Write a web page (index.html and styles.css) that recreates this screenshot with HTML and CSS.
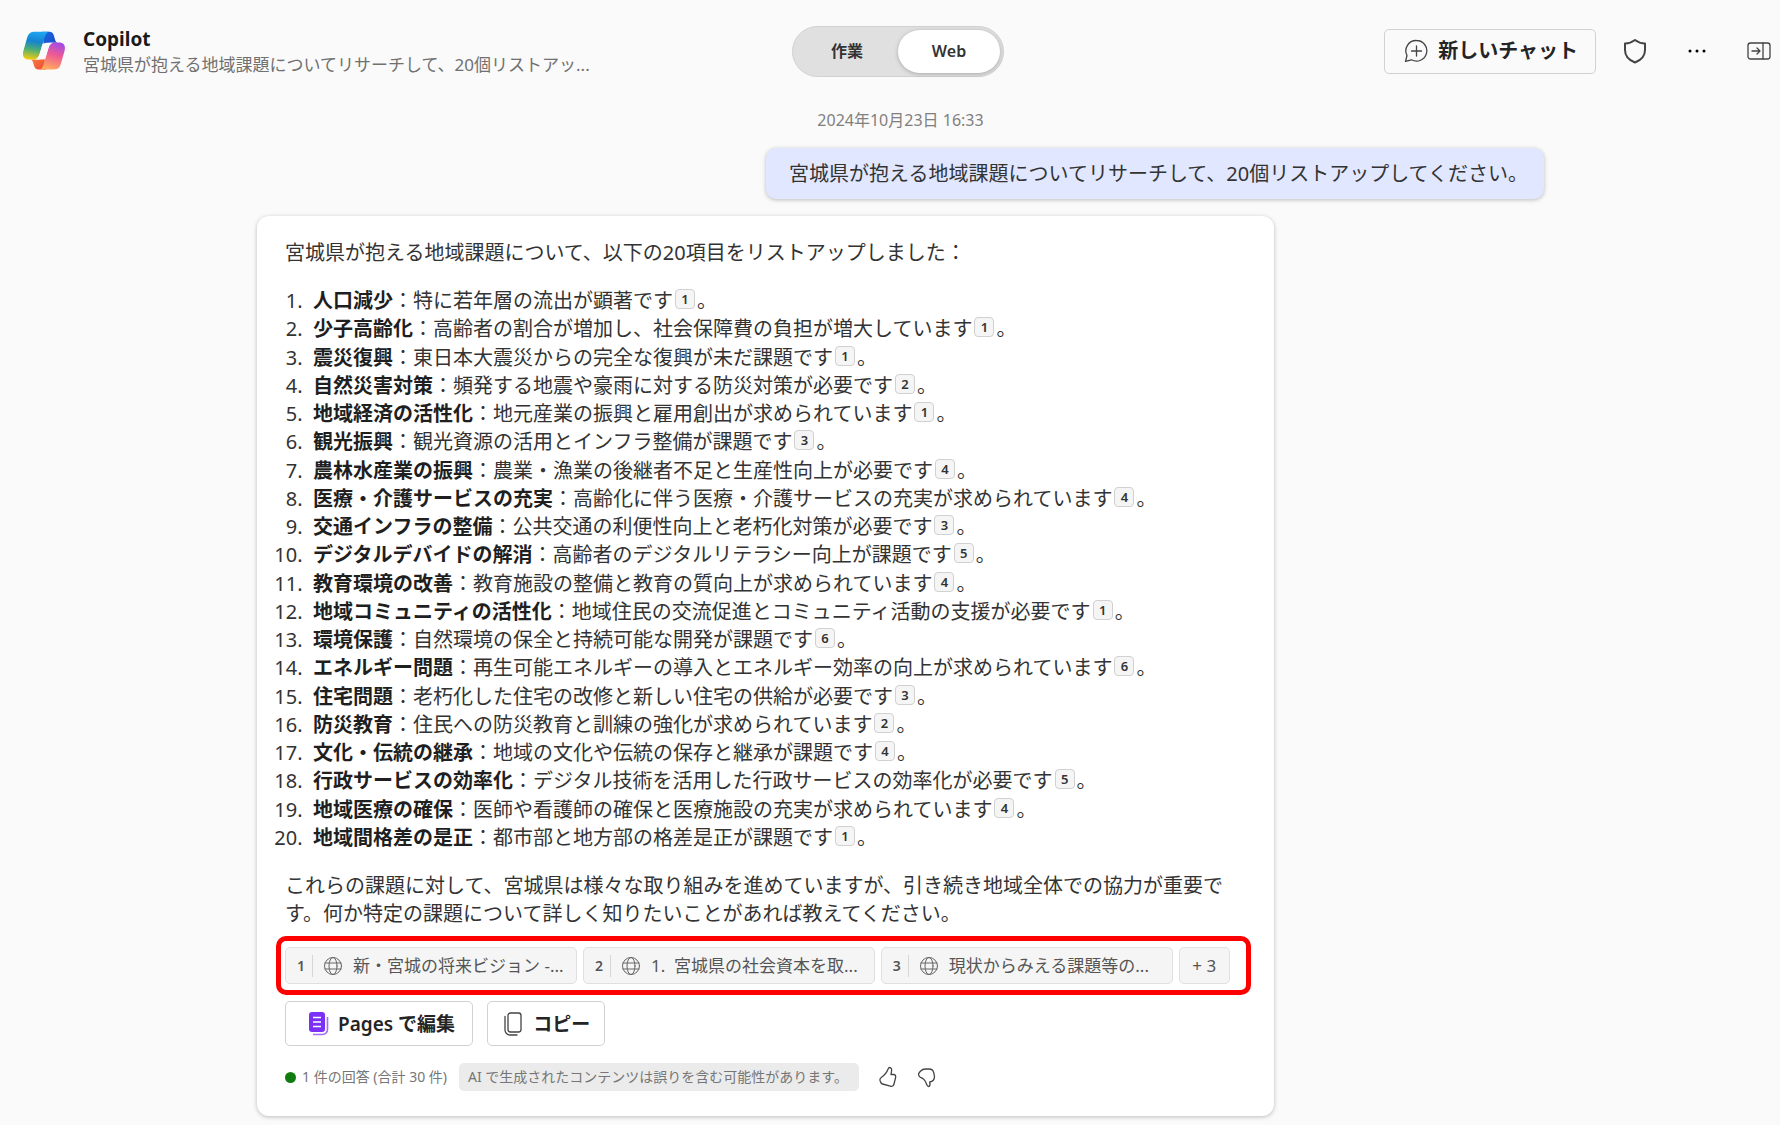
FILE: index.html
```
<!DOCTYPE html>
<html lang="ja">
<head>
    <meta charset="UTF-8">
    <meta name="viewport" content="width=device-width, initial-scale=1.0">
    <title>Copilot</title>
    <link rel="stylesheet" href="styles.css">
</head>
<body>

<header class="header">
    <div class="brand">
        <svg class="brand-logo" width="43" height="40" viewBox="0 0 43 40">
            <defs>
                <linearGradient id="lg-left" x1="0.5" y1="0" x2="0.35" y2="1">
                    <stop offset="0" stop-color="#1fa5f0"/>
                    <stop offset="0.35" stop-color="#1583d0"/>
                    <stop offset="0.65" stop-color="#4fae72"/>
                    <stop offset="1" stop-color="#f2cc10"/>
                </linearGradient>
                <linearGradient id="lg-top" x1="0" y1="0" x2="1" y2="1">
                    <stop offset="0" stop-color="#1b6be0"/>
                    <stop offset="1" stop-color="#1a45c8"/>
                </linearGradient>
                <linearGradient id="lg-right" x1="0.7" y1="0" x2="0.4" y2="1">
                    <stop offset="0" stop-color="#a04be8"/>
                    <stop offset="0.45" stop-color="#ee5a94"/>
                    <stop offset="1" stop-color="#ffab5c"/>
                </linearGradient>
                <linearGradient id="lg-bottom" x1="0" y1="0" x2="1" y2="1">
                    <stop offset="0" stop-color="#fb8a3c"/>
                    <stop offset="1" stop-color="#ec4638"/>
                </linearGradient>
            </defs>
            <path fill="url(#lg-top)" d="M20 .7h7.500c2.500 0 3.700 1.300 4.400 3.800l1.100 4c.5 1.700 1.200 3 3 3.300H28c-3.500 0-5 1-6 4z"/>
            <path fill="url(#lg-bottom)" d="M24 38.500h-7.500c-2.500 0-3.700-1.300-4.400-3.800l-1.100-3.500c-.5-1.500-1.200-2.500-3-2.800h7.500c3.500 0 5-1 6.500-4z"/>
            <path fill="url(#lg-left)" d="M12 .7h15c-2.500.5-3.700 3-4.700 6.500l-4.600 15.500c-1.200 4-3 5.800-6.200 5.800H7c-5 0-7.200-3.500-5.500-9L5.500 5.500C6.500 2.200 9 .7 12 .7z"/>
            <path fill="url(#lg-right)" d="M31.500 38.500H18c2-.7 3-3 4-6.500l4.500-15c1.200-4 3-5.500 6.200-5.500H37c5 0 7 3.500 5.400 9L38.500 34c-1 3-3.500 4.500-7 4.500z"/>
            <path fill="#fafafa" d="M28.500 11.800h4c-3.200 0-4.800 1.700-6 5.200l-3 9.500c-.6 1.500-2 2-3.500 2h-8.500c3.200 0 5-1.800 6.200-5.800l2.300-7.700c.9-2.700 2.500-3.200 8.500-3.200z"/>
        </svg>
        <div class="brand-text">
            <h1>Copilot</h1>
            <p>宮城県が抱える地域課題についてリサーチして、20個リストアッ...</p>
        </div>
    </div>

    <div class="mode">
        <button type="button" class="mode-item">作業</button>
        <button type="button" class="mode-item is-selected">Web</button>
    </div>

    <div class="tools">
        <button type="button" class="btn btn-new">
            <svg width="24" height="24" viewBox="0 0 24 24" class="line"><path d="M12.500 1.500A10.300 10.300 0 1 1 7.500 20.800L1.500 22.300L3 16.500A10.300 10.300 0 0 1 12.500 1.500zM12.500 7v10M7.500 12h10"/></svg>
            新しいチャット
        </button>
        <button type="button" class="tool" aria-label="セキュリティ">
            <svg width="24" height="26" viewBox="0 0 24 26" class="line thick"><path d="M12 2c3 2.300 6 3.500 10 3.600V12c0 6-3.500 10-10 12.500C5.500 22 2 18 2 12V5.600C6 5.500 9 4.300 12 2z"/></svg>
        </button>
        <button type="button" class="tool" aria-label="その他">
            <svg width="24" height="24" viewBox="0 0 24 24"><circle cx="5" cy="12" r="1.500"/><circle cx="12" cy="12" r="1.500"/><circle cx="19" cy="12" r="1.500"/></svg>
        </button>
        <button type="button" class="tool" aria-label="パネルを閉じる">
            <svg width="24" height="24" viewBox="0 0 24 24" class="line"><rect x="1" y="4" width="22" height="16" rx="2.500"/><path d="M16 4v16M5 12h8M10 9l3 3-3 3"/></svg>
        </button>
    </div>
</header>

<main class="chat">
    <time class="date">2024年10月23日 16:33</time>

    <p class="question">宮城県が抱える地域課題についてリサーチして、20個リストアップしてください。</p>

    <article class="answer">
        <p>宮城県が抱える地域課題について、以下の20項目をリストアップしました：</p>
        <ol class="issues">
            <li><b>人口減少</b>：特に若年層の流出が顕著です<a href="#" class="cite">1</a>。</li>
            <li><b>少子高齢化</b>：高齢者の割合が増加し、社会保障費の負担が増大しています<a href="#" class="cite">1</a>。</li>
            <li><b>震災復興</b>：東日本大震災からの完全な復興が未だ課題です<a href="#" class="cite">1</a>。</li>
            <li><b>自然災害対策</b>：頻発する地震や豪雨に対する防災対策が必要です<a href="#" class="cite">2</a>。</li>
            <li><b>地域経済の活性化</b>：地元産業の振興と雇用創出が求められています<a href="#" class="cite">1</a>。</li>
            <li><b>観光振興</b>：観光資源の活用とインフラ整備が課題です<a href="#" class="cite">3</a>。</li>
            <li><b>農林水産業の振興</b>：農業・漁業の後継者不足と生産性向上が必要です<a href="#" class="cite">4</a>。</li>
            <li><b>医療・介護サービスの充実</b>：高齢化に伴う医療・介護サービスの充実が求められています<a href="#" class="cite">4</a>。</li>
            <li><b>交通インフラの整備</b>：公共交通の利便性向上と老朽化対策が必要です<a href="#" class="cite">3</a>。</li>
            <li><b>デジタルデバイドの解消</b>：高齢者のデジタルリテラシー向上が課題です<a href="#" class="cite">5</a>。</li>
            <li><b>教育環境の改善</b>：教育施設の整備と教育の質向上が求められています<a href="#" class="cite">4</a>。</li>
            <li><b>地域コミュニティの活性化</b>：地域住民の交流促進とコミュニティ活動の支援が必要です<a href="#" class="cite">1</a>。</li>
            <li><b>環境保護</b>：自然環境の保全と持続可能な開発が課題です<a href="#" class="cite">6</a>。</li>
            <li><b>エネルギー問題</b>：再生可能エネルギーの導入とエネルギー効率の向上が求められています<a href="#" class="cite">6</a>。</li>
            <li><b>住宅問題</b>：老朽化した住宅の改修と新しい住宅の供給が必要です<a href="#" class="cite">3</a>。</li>
            <li><b>防災教育</b>：住民への防災教育と訓練の強化が求められています<a href="#" class="cite">2</a>。</li>
            <li><b>文化・伝統の継承</b>：地域の文化や伝統の保存と継承が課題です<a href="#" class="cite">4</a>。</li>
            <li><b>行政サービスの効率化</b>：デジタル技術を活用した行政サービスの効率化が必要です<a href="#" class="cite">5</a>。</li>
            <li><b>地域医療の確保</b>：医師や看護師の確保と医療施設の充実が求められています<a href="#" class="cite">4</a>。</li>
            <li><b>地域間格差の是正</b>：都市部と地方部の格差是正が課題です<a href="#" class="cite">1</a>。</li>
        </ol>
        <p>これらの課題に対して、宮城県は様々な取り組みを進めていますが、引き続き地域全体での協力が重要です。何か特定の課題について詳しく知りたいことがあれば教えてください。</p>

        <div class="sources">
            <a href="#" class="source">
                <span class="source-num">1</span>
                <svg width="20" height="20" viewBox="0 0 20 20" class="line thin"><circle cx="10" cy="10" r="8.500"/><ellipse cx="10" cy="10" rx="4" ry="8.500"/><path d="M2 7h16M2 13h16"/></svg>
                <span>新・宮城の将来ビジョン -...</span>
            </a>
            <a href="#" class="source">
                <span class="source-num">2</span>
                <svg width="20" height="20" viewBox="0 0 20 20" class="line thin"><circle cx="10" cy="10" r="8.500"/><ellipse cx="10" cy="10" rx="4" ry="8.500"/><path d="M2 7h16M2 13h16"/></svg>
                <span>1.&nbsp; 宮城県の社会資本を取...</span>
            </a>
            <a href="#" class="source">
                <span class="source-num">3</span>
                <svg width="20" height="20" viewBox="0 0 20 20" class="line thin"><circle cx="10" cy="10" r="8.500"/><ellipse cx="10" cy="10" rx="4" ry="8.500"/><path d="M2 7h16M2 13h16"/></svg>
                <span>現状からみえる課題等の...</span>
            </a>
            <button type="button" class="source-more">+ 3</button>
        </div>

        <div class="actions">
            <button type="button" class="btn btn-pages">
                <svg width="20" height="24" viewBox="0 0 20 24"><rect x="0" y="0" width="16" height="20" rx="3" fill="#7b2ff7"/><path d="M4 5.500h8M4 10h8M4 14.500h8" stroke="#fff" stroke-width="1.500"/><path d="M18.500 5v12.500a5 5 0 0 1-5 5H4" fill="none" stroke="#a46bfa" stroke-width="1.600"/></svg>
                Pages で編集
            </button>
            <button type="button" class="btn btn-copy">
                <svg width="18" height="24" viewBox="0 0 18 24" class="line"><rect x="4" y="1" width="13" height="19" rx="2.500"/><path d="M1 4.500V18a5 5 0 0 0 5 5h7"/></svg>
                コピー
            </button>
        </div>

        <footer class="status">
            <span class="count">1 件の回答 (合計 30 件)</span>
            <span class="notice">AI で生成されたコンテンツは誤りを含む可能性があります。</span>
            <button type="button" class="vote" aria-label="高く評価">
                <svg width="20" height="22" viewBox="0 0 20 22" class="line"><path d="M11.500 1.500c2 0 2.400 2 2 4L13 8.500h2.500c1.800 0 2.500 1.300 2.100 3l-1.600 6.500c-.5 2-1.800 2.700-3.700 2.200L4.500 18c-1-.3-1.500-.8-1.800-1.800L2 14.500c-.4-1.400 0-2.200 1.200-3C6.500 9.500 9 6 10.200 2.800c.3-.9.600-1.300 1.300-1.300z"/></svg>
            </button>
            <button type="button" class="vote" aria-label="低く評価">
                <svg width="20" height="22" viewBox="0 0 20 22" class="line"><path d="M11.500 20.500c1.500 0 1.800-1.800 1.200-4.500 2.800-.5 4.800-2.500 4.800-5.500l-.7-3.700C16.200 4.200 14.500 3 12 3H8.500C6.500 3 5 3.600 3.700 5L2.300 6.500C1 8 1.500 10.500 3.500 11.300c3.300 1.200 5 3.200 6 6.700.5 1.700 1 2.500 2 2.500z"/></svg>
            </button>
        </footer>
    </article>
</main>

</body>
</html>
```
FILE: styles.css
```
* {
    margin: 0;
    padding: 0;
    box-sizing: border-box;
}
body {
    font-family: "Noto Sans", "Noto Sans CJK JP", sans-serif;
    font-size: 20px;
    line-height: 28px;
    color: #333;
    background: #fafafa;
}
button {
    font: inherit;
    color: inherit;
    border: 0;
    background: none;
    white-space: nowrap;
}
a {
    color: inherit;
    text-decoration: none;
}
svg {
    flex: none;
    display: block;
}
.line {
    fill: none;
    stroke: #444;
    stroke-width: 1.3;
    stroke-linejoin: round;
    stroke-linecap: round;
}
.thick {
    stroke-width: 2;
}
.thin {
    stroke: #666;
    stroke-width: 1;
}

/* header */
.header {
    display: grid;
    grid-template-columns: 1fr auto 1fr;
    align-items: center;
    padding: 25px 9px 0 22px;
}
.brand {
    display: flex;
    align-items: center;
    gap: 18px;
    white-space: nowrap;
}
.brand-text {
    padding-top: 2px;
    line-height: 25px;
}
.brand h1 {
    font-size: 19px;
    color: #1a1a1a;
}
.brand p {
    font-size: 17px;
    color: #707070;
}
.mode {
    display: flex;
    margin-left: 3px;
    padding: 3px;
    border: 1px solid #d1d1d1;
    border-radius: 26px;
    background: #e0e0e0;
}
.mode-item {
    width: 102px;
    height: 43px;
    border-radius: 22px;
    font-size: 16px;
    font-weight: 600;
}
.mode-item.is-selected {
    background: #fff;
    box-shadow: 0 1px 4px rgba(0, 0, 0, .25);
}
.tools {
    display: flex;
    justify-content: flex-end;
    align-items: center;
}
.tool {
    margin-left: 38px;
}
.tools .btn-new + .tool {
    margin-left: 27px;
}
.btn {
    display: flex;
    align-items: center;
    height: 45px;
    border: 1px solid #d1d1d1;
    border-radius: 5px;
    font-weight: 600;
    color: #242424;
}
.btn-new {
    gap: 10px;
    padding: 0 17px 0 19px;
}

/* conversation */
.chat {
    display: flex;
    flex-direction: column;
    align-items: flex-start;
    padding: 31px 236px 9px 257px;
}
.date {
    align-self: center;
    font-size: 16px;
    line-height: 24px;
    color: #808080;
}
.question {
    align-self: flex-end;
    margin: 16px 0 17px;
    padding: 12px 16px 11px 23px;
    border-radius: 10px;
    background: #e0e7ff;
    box-shadow: 0 1px 4px rgba(0, 0, 0, .25);
}
.answer {
    width: 79%;
    min-width: 1016px;
    padding: 23px 40px 25px 28px;
    border-radius: 12px;
    background: #fff;
    box-shadow: 0 1px 4px rgba(0, 0, 0, .25);
}
.issues {
    display: grid;
    align-content: space-between;
    min-height: 565px;
    margin: 20px 0;
    padding-left: 28px;
}
.issues li::marker {
    content: counter(list-item) ".\a0\a0";
}
.issues b {
    color: #1f1f1f;
}
.cite {
    display: inline-block;
    width: 20px;
    height: 20px;
    margin: 0 2px;
    border: 1px solid #d1d1d1;
    border-radius: 4px;
    background: #f5f5f5;
    font-size: 13px;
    font-weight: 600;
    line-height: 18px;
    text-align: center;
    vertical-align: 4px;
}

/* references */
.sources {
    display: flex;
    gap: 6px;
    margin: 8px -17px 6px -9px;
    padding: 6px 16px 6px 4px;
    border: 5px solid #f00;
    border-radius: 10px;
    font-size: 17px;
    white-space: nowrap;
}
.source,
.source-more {
    height: 37px;
    border: 1px solid #e0e0e0;
    border-radius: 5px;
    background: #f5f5f5;
    color: #555;
}
.source {
    display: flex;
    flex: 1;
    align-items: center;
    gap: 10px;
}
.source-num {
    width: 27px;
    padding-left: 11px;
    border-right: 1px solid #d6d6d6;
    font-size: 14px;
    font-weight: 600;
    line-height: 22px;
}
.source-more {
    width: 51px;
}

.actions {
    display: flex;
    gap: 14px;
    font-size: 19px;
}
.btn-pages {
    gap: 9px;
    padding: 0 17px 0 23px;
}
.btn-copy {
    gap: 11px;
    padding: 0 14px 0 16px;
}

.status {
    display: flex;
    align-items: center;
    margin-top: 17px;
    font-size: 14px;
    color: #767676;
}
.count {
    display: flex;
    align-items: center;
    gap: 6px;
    margin-right: 12px;
}
.count::before {
    content: "";
    width: 11px;
    height: 11px;
    border-radius: 50%;
    background: #107c10;
}
.notice {
    padding: 0 11px 0 9px;
    border-radius: 5px;
    background: #ebebeb;
}
.vote {
    margin-left: 19px;
}
```
